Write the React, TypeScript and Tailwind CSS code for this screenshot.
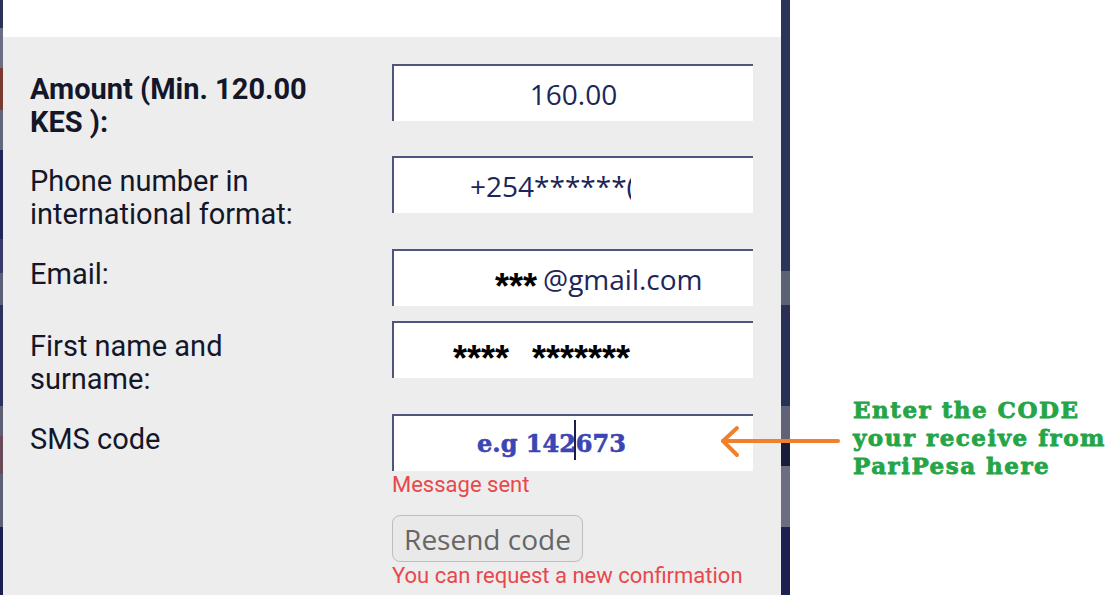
import React from 'react';

const labelFont = { fontFamily: 'Roboto, "Liberation Sans", sans-serif' };
const fieldFont = { fontFamily: '"Open Sans", "Noto Sans", sans-serif' };
const slabFont = { fontFamily: '"DejaVu Serif", "Liberation Serif", serif' };
const starFont = { fontFamily: '"Liberation Sans", Arial, sans-serif' };

interface RowProps {
  label: React.ReactNode;
  bold?: boolean;
  className?: string;
  children: React.ReactNode;
}

const Row: React.FC<RowProps> = ({ label, bold, className, children }) => (
  <div className={`flex ${className ?? ''}`}>
    <div
      className={`w-[362px] shrink-0 pt-[9px] pr-2 text-[29px] leading-[33px] text-[#131729] ${bold ? 'font-bold' : ''}`}
      style={labelFont}
    >
      {label}
    </div>
    <div className="w-[361px] shrink-0">{children}</div>
  </div>
);

const Field: React.FC<{ children: React.ReactNode; className?: string }> = ({ children, className }) => (
  <div
    className={`relative h-[57px] bg-white border-t-2 border-l-2 border-[#50557c] flex items-center overflow-hidden ${className ?? ''}`}
  >
    {children}
  </div>
);

const Stars: React.FC<{ text: string; className?: string }> = ({ text, className }) => (
  <span className={`pt-[16px] text-[36px] leading-none font-bold text-black ${className ?? ''}`} style={starFont}>
    {text}
  </span>
);

const App: React.FC = () => {
  return (
    <div className="relative flex w-[1120px] h-[595px] overflow-hidden bg-white">
      {/* page behind the modal, left edge */}
      <div className="w-[3px] shrink-0 flex flex-col">
        <div className="h-[28px] shrink-0 bg-[#2a3258]" />
        <div className="h-[40px] shrink-0 bg-[#6a6e80]" />
        <div className="h-[42px] shrink-0 bg-[#7a3a30]" />
        <div className="h-[40px] shrink-0 bg-[#62667a]" />
        <div className="h-[89px] shrink-0 bg-[#1f2556]" />
        <div className="h-[34px] shrink-0 bg-[#3a3a6a]" />
        <div className="h-[32px] shrink-0 bg-[#5b6076]" />
        <div className="h-[101px] shrink-0 bg-[#2a3260]" />
        <div className="h-[30px] shrink-0 bg-[#5c6072]" />
        <div className="h-[38px] shrink-0 bg-[#6a4a58]" />
        <div className="h-[53px] shrink-0 bg-[#5c6072]" />
        <div className="flex-1 bg-[#1b2050]" />
      </div>

      {/* modal */}
      <div className="w-[778px] shrink-0 flex flex-col">
        <div className="h-[37px] shrink-0 bg-white" />
        <div className="flex-1 shrink-0 bg-[#ededed] pl-[27px] pt-[27px]">
          <Row bold label={<>Amount (Min. 120.00<br />KES ):</>}>
            <Field className="justify-center">
              <span className="text-[28px] text-[#1c2658]" style={fieldFont}>160.00</span>
            </Field>
          </Row>

          <Row className="mt-[17px]" label={<>Phone number in<br />international format:</>}>
            <Field>
              <span
                className="ml-[76px] w-[161px] overflow-hidden whitespace-nowrap text-[28px] text-[#1c2658]"
                style={fieldFont}
              >
                +254******(
              </span>
            </Field>
          </Row>

          <Row className="mt-[18px]" label="Email:">
            <Field>
              <span className="ml-[101px] flex items-center whitespace-nowrap">
                <Stars text="***" />
                <span className="ml-[6px] text-[28px] text-[#1c2658]" style={fieldFont}>@gmail.com</span>
              </span>
            </Field>
          </Row>

          <Row className="mt-[15px]" label={<>First name and<br />surname:</>}>
            <Field>
              <span className="ml-[59px] flex items-center whitespace-nowrap">
                <Stars text="****" />
                <Stars text="*******" className="ml-[23px]" />
              </span>
            </Field>
          </Row>

          <Row className="mt-[18px]" label="SMS code">
            <Field>
              <span
                className="ml-[83px] text-[24px] font-bold text-[#3b45b3] whitespace-pre [-webkit-text-stroke:0.6px_#3b45b3]"
                style={slabFont}
              >
                e.g 142673
              </span>
              <span className="absolute left-[180px] top-[4px] h-[40px] w-[2px] bg-[#1a1f4a]" />
            </Field>
            <div className="text-[22px] leading-[28px] text-[#e8484c]" style={labelFont}>
              Message sent
            </div>
            <button
              className="mt-[16px] h-[47px] w-[191px] rounded-[8px] border-[1.5px] border-[#bdbdbd] bg-[#e9e9e9] text-[28px] text-[#666] leading-none"
              style={fieldFont}
            >
              Resend code
            </button>
            <div className="text-[22px] leading-[28px] text-[#e8484c]" style={labelFont}>
              You can request a new confirmation code in 10 seconds
            </div>
          </Row>
        </div>
      </div>

      {/* page behind the modal, right edge */}
      <div className="w-[9px] shrink-0 flex flex-col">
        <div className="h-[271px] shrink-0 bg-[#2b3459]" />
        <div className="h-[34px] shrink-0 bg-[#5d6175]" />
        <div className="h-[101px] shrink-0 bg-[#283058]" />
        <div className="h-[34px] shrink-0 bg-[#606377]" />
        <div className="h-[26px] shrink-0 bg-[#1a1d3a]" />
        <div className="h-[61px] shrink-0 bg-[#6b6e80]" />
        <div className="flex-1 bg-[#1c2152]" />
      </div>

      {/* annotation */}
      <div className="flex-1 bg-white pl-[63px] pt-[396px]">
        <div
          className="text-[23px] leading-[28px] font-bold tracking-[1.5px] text-[#23a548] whitespace-nowrap [-webkit-text-stroke:0.8px_#23a548]"
          style={slabFont}
        >
          Enter the CODE<br />your receive from<br />PariPesa here
        </div>
      </div>

      <svg
        className="absolute left-[716px] top-[424px]"
        width="128"
        height="36"
        viewBox="0 0 128 36"
        fill="none"
      >
        <path d="M7 17 L122 17" stroke="#f0802c" strokeWidth="4" strokeLinecap="round" />
        <path d="M21 4 L7 17 L21 31" stroke="#f0802c" strokeWidth="4" strokeLinecap="round" strokeLinejoin="round" />
      </svg>
    </div>
  );
};

export default App;
